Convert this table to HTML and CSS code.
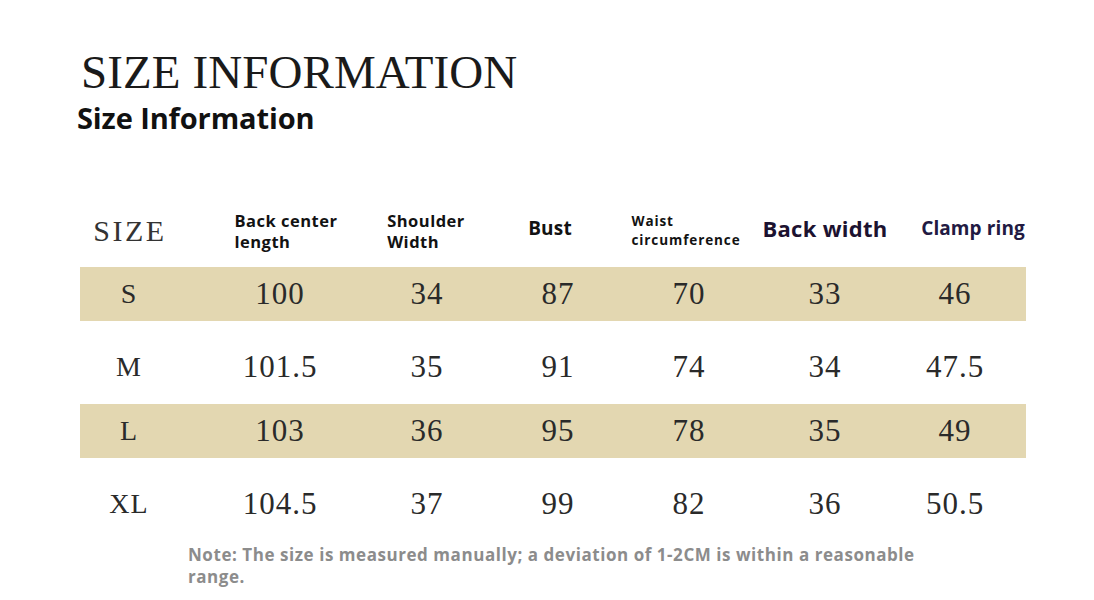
FILE: index.html
```html
<!DOCTYPE html>
<html lang="en">
<head>
<meta charset="utf-8">
<title>Size Information</title>
<link rel="stylesheet" href="styles.css">
</head>
<body>
<main class="page">
  <h1 class="title">SIZE INFORMATION</h1>
  <h2 class="subtitle">Size Information</h2>

  <section class="table">
    <div class="row head">
      <div class="cell size-h">SIZE</div>
      <div class="cell"><span class="lbl lbl-back">Back center<br>length</span></div>
      <div class="cell"><span class="lbl lbl-shoulder">Shoulder<br>Width</span></div>
      <div class="cell"><span class="lbl lbl-bust">Bust</span></div>
      <div class="cell"><span class="lbl lbl-waist">Waist<br>circumference</span></div>
      <div class="cell"><span class="lbl lbl-bw">Back width</span></div>
      <div class="cell"><span class="lbl lbl-clamp">Clamp ring</span></div>
    </div>

    <div class="row band">
      <div class="cell sz">S</div>
      <div class="cell num">100</div>
      <div class="cell num">34</div>
      <div class="cell num">87</div>
      <div class="cell num">70</div>
      <div class="cell num">33</div>
      <div class="cell num">46</div>
    </div>

    <div class="row plain">
      <div class="cell sz">M</div>
      <div class="cell num">101.5</div>
      <div class="cell num">35</div>
      <div class="cell num">91</div>
      <div class="cell num">74</div>
      <div class="cell num">34</div>
      <div class="cell num">47.5</div>
    </div>

    <div class="row band">
      <div class="cell sz">L</div>
      <div class="cell num">103</div>
      <div class="cell num">36</div>
      <div class="cell num">95</div>
      <div class="cell num">78</div>
      <div class="cell num">35</div>
      <div class="cell num">49</div>
    </div>

    <div class="row plain">
      <div class="cell sz">XL</div>
      <div class="cell num">104.5</div>
      <div class="cell num">37</div>
      <div class="cell num">99</div>
      <div class="cell num">82</div>
      <div class="cell num">36</div>
      <div class="cell num">50.5</div>
    </div>
  </section>

  <p class="note">Note: The size is measured manually; a deviation of 1-2CM is within a reasonable range.</p>
</main>
</body>
</html>
```

FILE: styles.css
```css
* { box-sizing: border-box; }

html, body {
  margin: 0;
  padding: 0;
  background: #ffffff;
}

.page {
  width: 1094px;
  height: 600px;
  padding: 49px 68px 0 80px;
  overflow: hidden;
}

.title {
  margin: 0 0 0 1px;
  font-family: "Liberation Serif", "Times New Roman", serif;
  font-weight: 400;
  font-size: 47px;
  line-height: 47px;
  letter-spacing: 0.1px;
  color: #1a1a1a;
}

.subtitle {
  margin: 5px 0 0 -3px;
  font-family: "Open Sans", "Liberation Sans", sans-serif;
  font-weight: 700;
  font-size: 29px;
  line-height: 34px;
  letter-spacing: -0.1px;
  color: #111111;
}

.table {
  margin-top: 60px;
  width: 946px;
}

.row {
  display: grid;
  grid-template-columns: 98px 204px 90px 172px 90px 182px 78px 1fr;
  align-items: center;
}

.row.head { height: 72px; }
.row.band { height: 54px; background: #e3d7b1; }
.row.plain { height: 83px; padding-top: 9px; }

.cell {
  display: flex;
  justify-content: center;
  align-items: center;
  white-space: nowrap;
}

.size-h {
  font-family: "Liberation Serif", "Times New Roman", serif;
  font-size: 30px;
  letter-spacing: 2.5px;
  color: #333333;
  padding-left: 2px;
}

.lbl {
  display: inline-block;
  text-align: left;
  font-family: "Open Sans", "Liberation Sans", sans-serif;
  font-weight: 700;
  color: #121212;
}

.lbl-back, .lbl-shoulder {
  font-size: 16.5px;
  line-height: 21px;
  letter-spacing: 0.5px;
}
.lbl-back { margin-left: 12px; }
.lbl-shoulder { margin-left: -2px; }

.lbl-bust {
  font-size: 19px;
  letter-spacing: 0.2px;
  margin-right: 16px;
  margin-bottom: 6px;
}

.lbl-waist {
  font-size: 13.5px;
  line-height: 19px;
  letter-spacing: 0.9px;
  margin-right: 6px;
}

.lbl-bw {
  font-size: 22px;
  letter-spacing: 0.3px;
  color: #1c1230;
  margin-bottom: 6px;
}

.lbl-clamp {
  font-size: 19px;
  letter-spacing: 0.1px;
  color: #221a42;
  margin-left: 36px;
  margin-bottom: 6px;
}

.sz {
  font-family: "Liberation Serif", "Times New Roman", serif;
  font-size: 28px;
  letter-spacing: 1px;
  color: #2a2a2a;
}

.num {
  font-family: "Liberation Serif", "Times New Roman", serif;
  font-size: 31px;
  letter-spacing: 1px;
  color: #2a2a2a;
}

.note {
  margin: 3px 0 0 108px;
  width: 745px;
  font-family: "Open Sans", "Liberation Sans", sans-serif;
  font-weight: 700;
  font-size: 17px;
  line-height: 22px;
  letter-spacing: 0.55px;
  color: #8c8c8c;
}
```
